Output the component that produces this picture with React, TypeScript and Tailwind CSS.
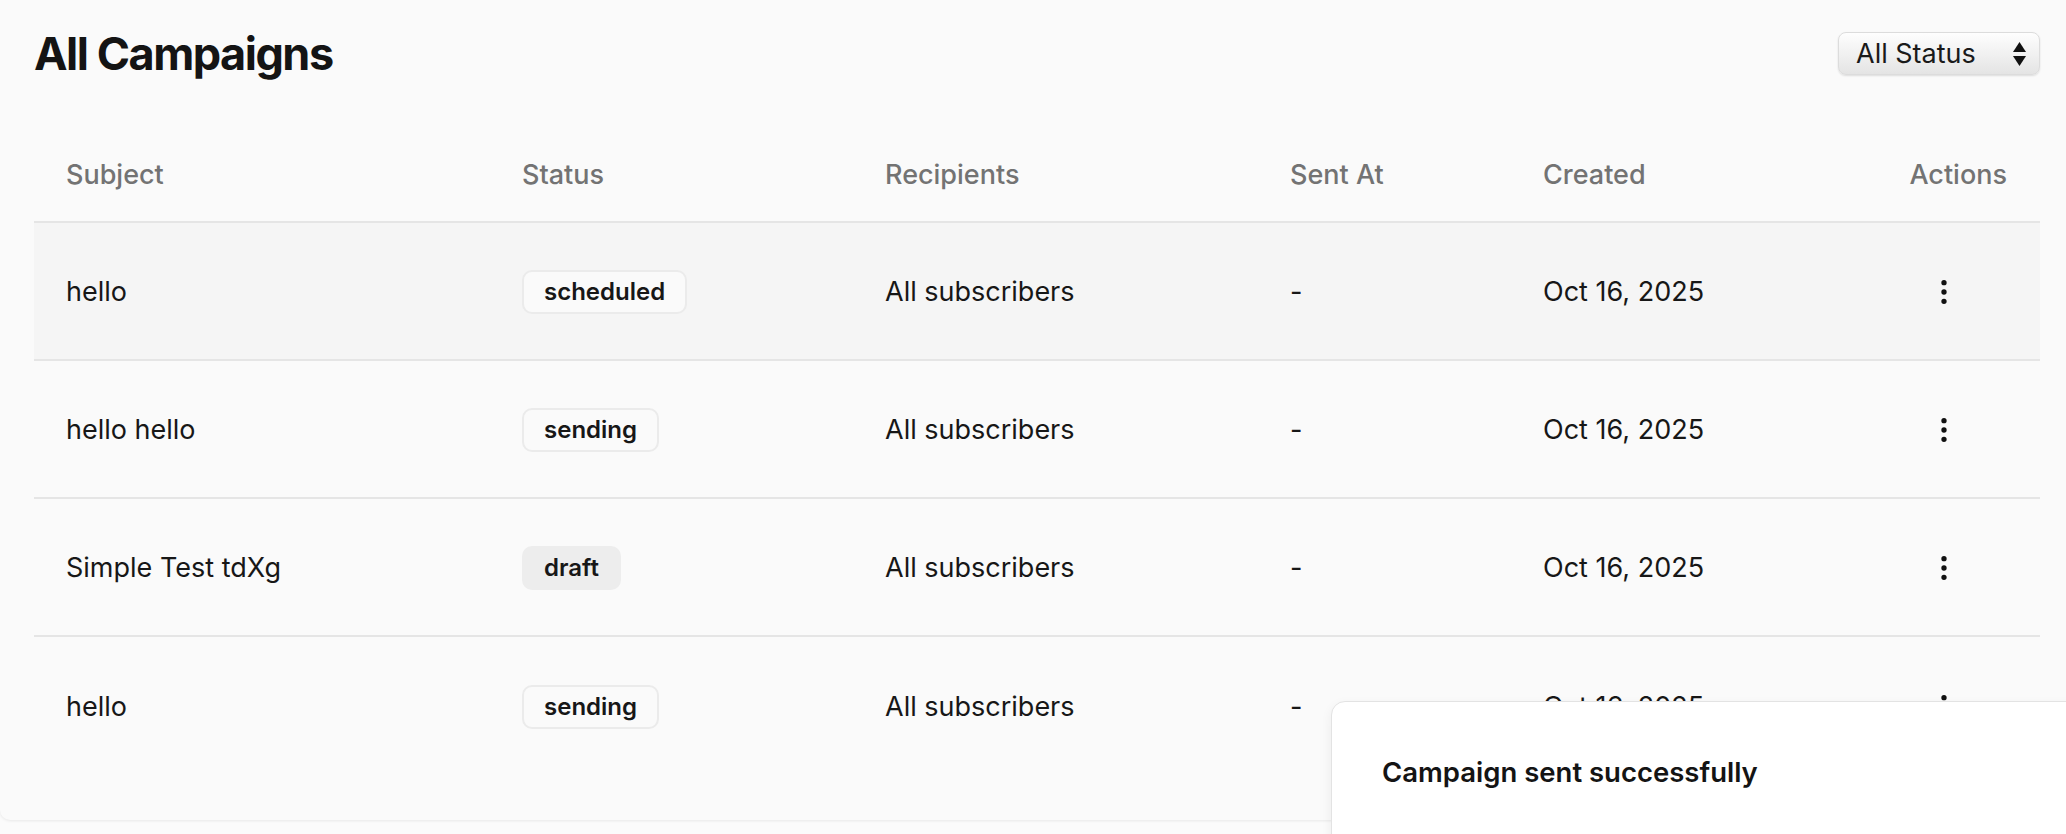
import React from "react";
import { EllipsisVertical } from "lucide-react";

type Row = { subject: string; status: "scheduled" | "sending" | "draft"; hover?: boolean };

const rows: Row[] = [
  { subject: "hello", status: "scheduled", hover: true },
  { subject: "hello hello", status: "sending" },
  { subject: "Simple Test tdXg", status: "draft" },
  { subject: "hello", status: "sending" },
];

const cols = "grid grid-cols-[456px_363px_405px_253px_329px_200px]";

function Badge({ status }: { status: Row["status"] }) {
  if (status === "draft") {
    return (
      <span className="inline-flex h-[44px] items-center rounded-[10px] border-2 border-transparent bg-[#ededed] px-[20px] text-[24px] font-semibold text-[#171717]">
        {status}
      </span>
    );
  }
  return (
    <span className="inline-flex h-[44px] items-center rounded-[10px] border-2 border-[#ebebeb] bg-[#fafafa] px-[20px] text-[24px] font-semibold text-[#171717]">
      {status}
    </span>
  );
}

export default function App() {
  return (
    <div
      className="relative h-[834px] w-[2066px] overflow-hidden bg-[#fbfbfb] text-[#171717]"
      style={{ fontFamily: "Inter, 'Noto Sans', sans-serif" }}
    >
      <div className="h-[820px] w-full rounded-bl-[10px] bg-[#fafafa] pl-[34px] pr-[26px] pt-[32px] shadow-[0_1px_3px_rgba(0,0,0,0.08)]">
        <div className="flex items-start justify-between">
          <h1 className="-mt-[5px] text-[45px] font-bold leading-[54px] tracking-[-0.033em] text-[#141414]">All Campaigns</h1>
          <div className="flex h-[43px] w-[202px] items-center justify-between rounded-[8px] border border-[#dcdcdc] bg-gradient-to-b from-[#fefefe] to-[#e4e4e4] pl-[17px] pr-[13px] shadow-[0_1px_2px_rgba(0,0,0,0.12)]">
            <span className="text-[27px] leading-none text-[#1a1a1a]">All Status</span>
            <svg width="13" height="24" viewBox="0 0 13 24">
              <polygon points="6.5,0 13,10 0,10" fill="#111" />
              <polygon points="0,14 13,14 6.5,24" fill="#111" />
            </svg>
          </div>
        </div>

        <div className="mt-[56px]">
          <div className={`${cols} h-[86px] items-center border-b-2 border-[#e5e5e5] pb-[8px] text-[27px] font-medium text-[#737373]`}>
            <div className="pl-[32px]">Subject</div>
            <div className="pl-[32px]">Status</div>
            <div className="pl-[32px]">Recipients</div>
            <div className="pl-[32px]">Sent At</div>
            <div className="pl-[32px]">Created</div>
            <div className="pr-[33px] text-right">Actions</div>
          </div>
          {rows.map((r, i) => (
            <div
              key={i}
              className={`${cols} h-[138px] items-center pt-[2px] text-[27px] ${i < rows.length - 1 ? "border-b-2 border-[#e5e5e5]" : ""} ${r.hover ? "bg-[#f5f5f5]" : ""}`}
            >
              <div className="pl-[32px]">{r.subject}</div>
              <div className="pl-[32px]">
                <Badge status={r.status} />
              </div>
              <div className="pl-[32px]">All subscribers</div>
              <div className="pl-[32px]">-</div>
              <div className="pl-[32px]">Oct 16, 2025</div>
              <div className="flex justify-end pr-[80px]">
                <EllipsisVertical size={32} strokeWidth={2} className="text-[#111]" />
              </div>
            </div>
          ))}
        </div>
      </div>

      <div className="absolute left-[1331px] top-[701px] h-[200px] w-[800px] rounded-tl-[14px] border border-[#e3e3e3] bg-white pl-[50px] pt-[50px] shadow-[0_4px_12px_rgba(0,0,0,0.06)]">
        <span className="text-[27.5px] font-semibold text-[#141414]">Campaign sent successfully</span>
      </div>
    </div>
  );
}
